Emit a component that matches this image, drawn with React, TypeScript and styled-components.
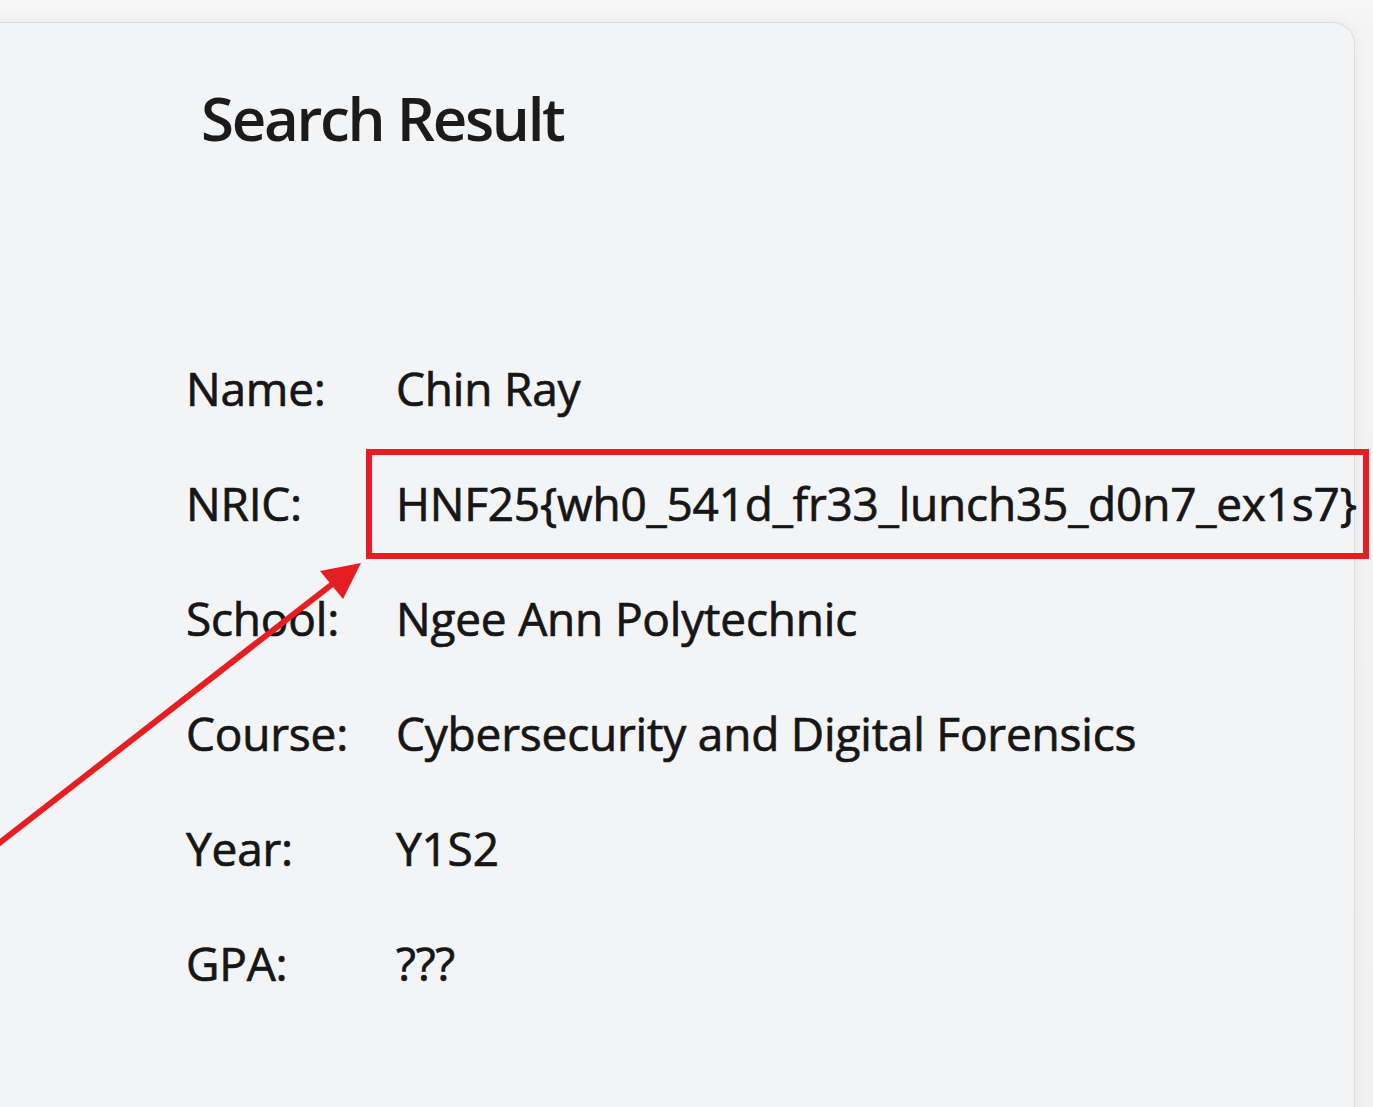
import styled, { createGlobalStyle } from "styled-components";

const GlobalStyle = createGlobalStyle`
  html, body {
    margin: 0;
    padding: 0;
    overflow: hidden;
    background: #f3f3f3;
  }
  body {
    font-family: "Open Sans", "Noto Sans", sans-serif;
  }
`;

const Page = styled.div`
  position: relative;
  width: 1373px;
  height: 1107px;
  overflow: hidden;
  background: linear-gradient(180deg, #f8f8f8 0, #f4f4f4 22px, #f1f1f1 100%);
`;

const Card = styled.section`
  box-sizing: border-box;
  margin: 22px 0 0 -40px;
  width: 1395px;
  min-height: 1200px;
  padding: 65px 0 0 227px;
  background: #f3f4f6;
  border: 1px solid #dcdde0;
  border-radius: 0 22px 0 0;
  box-shadow: 0 0 14px rgba(0, 0, 0, 0.05);
`;

const Title = styled.h1`
  margin: 0 0 217px 13px;
  font-size: 60px;
  line-height: 1;
  font-weight: 600;
  letter-spacing: -2.3px;
  color: #1b1b1b;
`;

const Details = styled.dl`
  margin: 0;
  display: grid;
  grid-template-columns: 210px auto;
  grid-auto-rows: 46px;
  row-gap: 69px;
  font-size: 46px;
  line-height: 1;
  letter-spacing: -0.2px;
  color: #161616;
  -webkit-text-stroke: 0.7px #161616;
`;

const Label = styled.dt`
  margin: 0 0 0 -2px;
`;

const Value = styled.dd`
  margin: 0 0 0 -2px;
  white-space: nowrap;
`;

const Highlight = styled.span`
  position: relative;
  display: inline-block;

  &::after {
    content: "";
    position: absolute;
    inset: -31px -12px -33px -30px;
    border: 6px solid #e61e22;
    pointer-events: none;
  }
`;

const ArrowLayer = styled.svg`
  position: absolute;
  top: 0;
  left: 0;
  pointer-events: none;
`;

const rows: { label: string; value: string; marked?: boolean }[] = [
  { label: "Name:", value: "Chin Ray" },
  { label: "NRIC:", value: "HNF25{wh0_541d_fr33_lunch35_d0n7_ex1s7}", marked: true },
  { label: "School:", value: "Ngee Ann Polytechnic" },
  { label: "Course:", value: "Cybersecurity and Digital Forensics" },
  { label: "Year:", value: "Y1S2" },
  { label: "GPA:", value: "???" },
];

export default function App() {
  return (
    <Page>
      <GlobalStyle />
      <Card>
        <Title>Search Result</Title>
        <Details>
          {rows.map((row) => [
            <Label key={row.label}>{row.label}</Label>,
            <Value key={row.label + "-v"}>
              {row.marked ? <Highlight>{row.value}</Highlight> : row.value}
            </Value>,
          ])}
        </Details>
      </Card>
      <ArrowLayer width="1373" height="1107" viewBox="0 0 1373 1107">
        <line x1="-20" y1="858" x2="335" y2="582" stroke="#e61e22" strokeWidth="6" />
        <polygon points="361,563 320,571 343,599" fill="#e61e22" />
      </ArrowLayer>
    </Page>
  );
}
